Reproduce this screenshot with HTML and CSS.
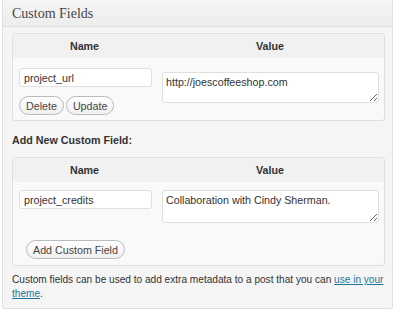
FILE: index.html
```html
<!DOCTYPE html>
<html lang="en">
<head>
    <meta charset="UTF-8">
    <title>Custom Fields</title>
    <link rel="stylesheet" href="styles.css">
</head>
<body>
    <div class="postbox">
        <h3 class="hndle">Custom Fields</h3>
        <div class="inside">
            <div class="meta-table">
                <div class="meta-head">
                    <div class="col-name">Name</div>
                    <div class="col-value">Value</div>
                </div>
                <div class="meta-row">
                    <div class="col-name">
                        <input type="text" class="key" value="project_url">
                        <div class="actions">
                            <button class="btn">Delete</button>
                            <button class="btn">Update</button>
                        </div>
                    </div>
                    <div class="col-value">
                        <textarea rows="2">http://joescoffeeshop.com</textarea>
                    </div>
                </div>
            </div>

            <p class="add-title">Add New Custom Field:</p>

            <div class="meta-table new-field">
                <div class="meta-head">
                    <div class="col-name">Name</div>
                    <div class="col-value">Value</div>
                </div>
                <div class="meta-row">
                    <div class="col-name">
                        <input type="text" class="key" value="project_credits">
                    </div>
                    <div class="col-value">
                        <textarea rows="2">Collaboration with Cindy Sherman.</textarea>
                    </div>
                </div>
                <div class="submit-row">
                    <button class="btn">Add Custom Field</button>
                </div>
            </div>

            <p class="note">Custom fields can be used to add extra metadata to a post that you can <a href="#">use in your theme</a>.</p>
        </div>
    </div>
</body>
</html>
```

FILE: styles.css
```css
body {
    margin: 0;
    padding: 0 7px 0 2px;
    background: #fff;
    font-family: "Liberation Sans", Arial, sans-serif;
    font-size: 10.7px;
    color: #333;
}
.postbox {
    border: 1px solid #dfdfdf;
    border-top: none;
    border-radius: 0 0 3px 3px;
    background: #f5f5f5;
    height: 309px;
    box-sizing: border-box;
}
.hndle {
    margin: 0;
    height: 27px;
    box-sizing: border-box;
    padding: 6px 0 0 9px;
    font-family: "Liberation Serif", Georgia, serif;
    font-weight: normal;
    font-size: 14px;
    color: #464646;
    background: linear-gradient(#f6f6f6, #ececec);
    border-bottom: 1px solid #dfdfdf;
}
.inside {
    padding: 6px 7px 0 9px;
}
.meta-table {
    background: #f9f9f9;
    border: 1px solid #dfdfdf;
    border-radius: 3px;
}
.meta-head {
    display: grid;
    grid-template-columns: 143px 1fr;
    height: 24px;
    align-items: center;
    background: #f1f1f1;
    font-weight: bold;
    text-align: center;
    color: #333;
}
.meta-row {
    display: grid;
    grid-template-columns: 139px 1fr;
    padding: 10px 5px 0 6px;
}
.meta-row .col-value {
    padding-left: 4px;
}
input.key {
    width: 133px;
    height: 19px;
    box-sizing: border-box;
    border: 1px solid #dfdfdf;
    border-radius: 3px;
    background: #fff;
    font: 10.7px "Liberation Sans", Arial, sans-serif;
    color: #333;
    padding: 0 4px;
    margin: 0;
}
textarea {
    display: block;
    width: 100%;
    height: 31px;
    box-sizing: border-box;
    border: 1px solid #dfdfdf;
    border-radius: 3px;
    background: #fff;
    font: 10.7px "Liberation Sans", Arial, sans-serif;
    color: #333;
    padding: 3px;
    margin: 4px 0 0;
}
.new-field .meta-row {
    padding-top: 8px;
}
.new-field textarea {
    margin-top: 0;
    height: 33px;
}
.actions {
    display: flex;
    gap: 2px;
    margin: 9px 0 5px;
}
.btn {
    height: 19px;
    padding: 0 6px;
    border: 1px solid #bbb;
    border-radius: 10px;
    background: linear-gradient(#fefefe, #f0f0f0);
    font: 10.7px "Liberation Sans", Arial, sans-serif;
    color: #464646;
    margin: 0;
}
.submit-row {
    padding: 17px 0 6px 13px;
}
.add-title {
    margin: 13px 0 11px;
    font-weight: bold;
}
.note {
    margin: 7px -5px 0 0;
    font-size: 10.1px;
    line-height: 14px;
}
.note a {
    color: #21759b;
}
```
